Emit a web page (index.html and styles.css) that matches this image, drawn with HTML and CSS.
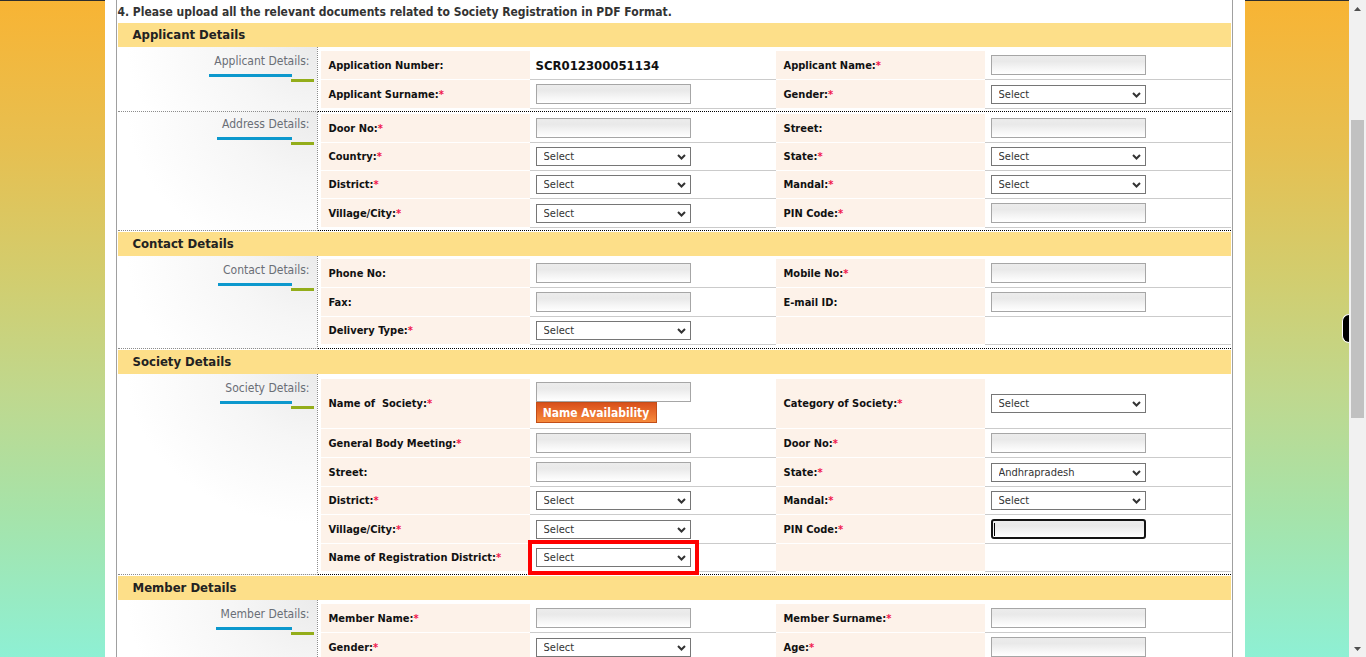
FILE: index.html
```html
<!DOCTYPE html>
<html lang="en">
<head>
<meta charset="utf-8">
<title>Society Registration</title>
<link rel="stylesheet" href="styles.css">
</head>
<body>
<div class="viewport">
  <div class="panel">
    <div class="form">
      <div class="intro">4. Please upload all the relevant documents related to Society Registration in PDF Format.</div>

      <div class="sec-head">Applicant Details</div>
      <div class="block">
        <div class="legend-col"><span class="legend">Applicant Details:</span></div>
        <div class="fields">
          <div class="lbl">Application Number:</div>
          <div class="val"><span class="appno">SCR012300051134</span></div>
          <div class="lbl">Applicant Name:<span class="req">*</span></div>
          <div class="val"><input class="inp" type="text"></div>

          <div class="lbl">Applicant Surname:<span class="req">*</span></div>
          <div class="val"><input class="inp" type="text"></div>
          <div class="lbl">Gender:<span class="req">*</span></div>
          <div class="val"><span class="sel"><select><option>Select</option></select><svg class="chev" width="9" height="6" viewBox="0 0 9 6"><path d="M1 1 L4.5 4.5 L8 1" fill="none" stroke="#333" stroke-width="2"/></svg></span></div>
        </div>
      </div>

      <div class="block addr">
        <div class="legend-col"><span class="legend">Address Details:</span></div>
        <div class="fields">
          <div class="lbl">Door No:<span class="req">*</span></div>
          <div class="val"><input class="inp" type="text"></div>
          <div class="lbl">Street:</div>
          <div class="val"><input class="inp" type="text"></div>

          <div class="lbl">Country:<span class="req">*</span></div>
          <div class="val"><span class="sel"><select><option>Select</option></select><svg class="chev" width="9" height="6" viewBox="0 0 9 6"><path d="M1 1 L4.5 4.5 L8 1" fill="none" stroke="#333" stroke-width="2"/></svg></span></div>
          <div class="lbl">State:<span class="req">*</span></div>
          <div class="val"><span class="sel"><select><option>Select</option></select><svg class="chev" width="9" height="6" viewBox="0 0 9 6"><path d="M1 1 L4.5 4.5 L8 1" fill="none" stroke="#333" stroke-width="2"/></svg></span></div>

          <div class="lbl">District:<span class="req">*</span></div>
          <div class="val"><span class="sel"><select><option>Select</option></select><svg class="chev" width="9" height="6" viewBox="0 0 9 6"><path d="M1 1 L4.5 4.5 L8 1" fill="none" stroke="#333" stroke-width="2"/></svg></span></div>
          <div class="lbl">Mandal:<span class="req">*</span></div>
          <div class="val"><span class="sel"><select><option>Select</option></select><svg class="chev" width="9" height="6" viewBox="0 0 9 6"><path d="M1 1 L4.5 4.5 L8 1" fill="none" stroke="#333" stroke-width="2"/></svg></span></div>

          <div class="lbl">Village/City:<span class="req">*</span></div>
          <div class="val"><span class="sel"><select><option>Select</option></select><svg class="chev" width="9" height="6" viewBox="0 0 9 6"><path d="M1 1 L4.5 4.5 L8 1" fill="none" stroke="#333" stroke-width="2"/></svg></span></div>
          <div class="lbl">PIN Code:<span class="req">*</span></div>
          <div class="val"><input class="inp" type="text"></div>
        </div>
      </div>

      <div class="sec-head">Contact Details</div>
      <div class="block contact">
        <div class="legend-col"><span class="legend">Contact Details:</span></div>
        <div class="fields">
          <div class="lbl">Phone No:</div>
          <div class="val"><input class="inp" type="text"></div>
          <div class="lbl">Mobile No:<span class="req">*</span></div>
          <div class="val"><input class="inp" type="text"></div>

          <div class="lbl">Fax:</div>
          <div class="val"><input class="inp" type="text"></div>
          <div class="lbl">E-mail ID:</div>
          <div class="val"><input class="inp" type="text"></div>

          <div class="lbl">Delivery Type:<span class="req">*</span></div>
          <div class="val"><span class="sel"><select><option>Select</option></select><svg class="chev" width="9" height="6" viewBox="0 0 9 6"><path d="M1 1 L4.5 4.5 L8 1" fill="none" stroke="#333" stroke-width="2"/></svg></span></div>
          <div class="lbl"></div>
          <div class="val"></div>
        </div>
      </div>

      <div class="sec-head">Society Details</div>
      <div class="block society">
        <div class="legend-col"><span class="legend">Society Details:</span></div>
        <div class="fields">
          <div class="lbl">Name of&nbsp; Society:<span class="req">*</span></div>
          <div class="val stack"><input class="inp" type="text"><button class="btn" type="button">Name Availability</button></div>
          <div class="lbl">Category of Society:<span class="req">*</span></div>
          <div class="val"><span class="sel"><select><option>Select</option></select><svg class="chev" width="9" height="6" viewBox="0 0 9 6"><path d="M1 1 L4.5 4.5 L8 1" fill="none" stroke="#333" stroke-width="2"/></svg></span></div>

          <div class="lbl">General Body Meeting:<span class="req">*</span></div>
          <div class="val"><input class="inp" type="text"></div>
          <div class="lbl">Door No:<span class="req">*</span></div>
          <div class="val"><input class="inp" type="text"></div>

          <div class="lbl">Street:</div>
          <div class="val"><input class="inp" type="text"></div>
          <div class="lbl">State:<span class="req">*</span></div>
          <div class="val"><span class="sel"><select><option>Andhrapradesh</option></select><svg class="chev" width="9" height="6" viewBox="0 0 9 6"><path d="M1 1 L4.5 4.5 L8 1" fill="none" stroke="#333" stroke-width="2"/></svg></span></div>

          <div class="lbl">District:<span class="req">*</span></div>
          <div class="val"><span class="sel"><select><option>Select</option></select><svg class="chev" width="9" height="6" viewBox="0 0 9 6"><path d="M1 1 L4.5 4.5 L8 1" fill="none" stroke="#333" stroke-width="2"/></svg></span></div>
          <div class="lbl">Mandal:<span class="req">*</span></div>
          <div class="val"><span class="sel"><select><option>Select</option></select><svg class="chev" width="9" height="6" viewBox="0 0 9 6"><path d="M1 1 L4.5 4.5 L8 1" fill="none" stroke="#333" stroke-width="2"/></svg></span></div>

          <div class="lbl">Village/City:<span class="req">*</span></div>
          <div class="val"><span class="sel"><select><option>Select</option></select><svg class="chev" width="9" height="6" viewBox="0 0 9 6"><path d="M1 1 L4.5 4.5 L8 1" fill="none" stroke="#333" stroke-width="2"/></svg></span></div>
          <div class="lbl">PIN Code:<span class="req">*</span></div>
          <div class="val"><div class="inp focus"><span class="caret"></span></div></div>

          <div class="lbl">Name of Registration District:<span class="req">*</span></div>
          <div class="val"><span class="sel hl"><select><option>Select</option></select><svg class="chev" width="9" height="6" viewBox="0 0 9 6"><path d="M1 1 L4.5 4.5 L8 1" fill="none" stroke="#333" stroke-width="2"/></svg></span></div>
          <div class="lbl"></div>
          <div class="val"></div>
        </div>
      </div>

      <div class="sec-head">Member Details</div>
      <div class="block">
        <div class="legend-col"><span class="legend">Member Details:</span></div>
        <div class="fields">
          <div class="lbl">Member Name:<span class="req">*</span></div>
          <div class="val"><input class="inp" type="text"></div>
          <div class="lbl">Member Surname:<span class="req">*</span></div>
          <div class="val"><input class="inp" type="text"></div>

          <div class="lbl">Gender:<span class="req">*</span></div>
          <div class="val"><span class="sel"><select><option>Select</option></select><svg class="chev" width="9" height="6" viewBox="0 0 9 6"><path d="M1 1 L4.5 4.5 L8 1" fill="none" stroke="#333" stroke-width="2"/></svg></span></div>
          <div class="lbl">Age:<span class="req">*</span></div>
          <div class="val"><input class="inp" type="text"></div>
        </div>
      </div>
    </div>
  </div>
  <div class="side-tab"></div>
</div>
<div class="scrollbar">
  <div class="sb-btn"><svg width="7" height="4" viewBox="0 0 7 4"><path d="M0 4 L3.5 0 L7 4 Z" fill="#505050"/></svg></div>
  <div class="sb-track"><div class="sb-thumb"></div></div>
  <div class="sb-btn"><svg width="7" height="4" viewBox="0 0 7 4"><path d="M0 0 L3.5 4 L7 0 Z" fill="#505050"/></svg></div>
</div>
</body>
</html>
```

FILE: styles.css
```css
* { box-sizing: border-box; }
html, body { margin: 0; padding: 0; }
body {
  display: flex;
  height: 657px;
  overflow: hidden;
  font-family: "DejaVu Sans Condensed", "DejaVu Sans", sans-serif;
  color: #1a1a1a;
}
.viewport {
  flex: 1;
  position: relative;
  display: flex;
  justify-content: center;
  background:
    linear-gradient(#2e2e2e 0, #2e2e2e 1px, transparent 1px),
    linear-gradient(180deg, #f8b434 0%, #e7bf50 22%, #d2cd6e 42%, #bfd88e 60%, #a6e3a9 78%, #8ef0d4 100%);
}
.panel {
  width: 1140px;
  background: #fff;
  padding: 0 12px 0 11px;
}
.form {
  min-height: 100%;
  border-left: 1px solid #a0a0a0;
  border-right: 1px solid #a0a0a0;
}
.intro {
  height: 22px;
  padding: 3px 0 0 1px;
  font-size: 12px;
  line-height: 19px;
  font-weight: bold;
  color: #333;
  white-space: nowrap;
}
.sec-head {
  margin: 1px 1px 0;
  height: 24px;
  padding-left: 15px;
  background: #fddf89;
  font-size: 13px;
  line-height: 24px;
  font-weight: bold;
  color: #222;
}
.block {
  display: flex;
  margin: 0 1px;
}
.legend-col {
  width: 200px;
  flex: none;
  padding: 3px 7px 0 0;
  text-align: right;
  border-right: 1px dotted #8c8c8c;
  border-bottom: 1px dotted #8c8c8c;
  background: radial-gradient(ellipse 190px 150px at 100% 0, #ebebeb 0%, #f6f6f6 45%, #fff 100%);
}
.addr .legend-col { padding-top: 1px; }
.legend {
  position: relative;
  display: inline-block;
  font-size: 12px;
  line-height: 14px;
  color: #6a6e76;
}
.legend::before {
  content: "";
  position: absolute;
  left: -5px;
  right: 18px;
  top: 20px;
  height: 3px;
  background: #0c98cd;
}
.legend::after {
  content: "";
  position: absolute;
  right: -4px;
  width: 23px;
  top: 25px;
  height: 3px;
  background: #93ad1a;
}
.fields {
  flex: 1;
  display: grid;
  grid-template-columns: 209px 246px 209px 246px;
  align-content: start;
  padding: 4px 0 2px 3px;
  border-bottom: 1px dotted #000;
}
.addr .fields { padding-top: 2px; }
.contact .fields { padding-top: 3px; padding-bottom: 3px; }
.society .fields { padding-top: 5px; }
.lbl {
  display: flex;
  align-items: center;
  padding-left: 8px;
  background: #fdf2e9;
  border-bottom: 1px solid #fff;
  font-size: 11px;
  font-weight: bold;
  color: #111;
  white-space: nowrap;
}
.req { color: #f0174d; }
.val {
  display: flex;
  align-items: center;
  min-height: 28px;
  padding: 4px 0 4px 6px;
  border-bottom: 1px solid #cbcbcb;
}
.val.stack {
  flex-direction: column;
  align-items: flex-start;
  padding: 3px 0 5px 6px;
}
.appno {
  font-size: 13px;
  font-weight: bold;
  color: #111;
}
.inp {
  display: block;
  width: 155px;
  height: 20px;
  margin: 0;
  padding: 0 3px;
  border: 1px solid #a6a6a6;
  border-radius: 0;
  background: linear-gradient(180deg, #ececec 0%, #e9e9e9 30%, #f6f6f6 70%, #ffffff 100%);
  font-size: 11px;
}
.inp.focus {
  border: 2px solid #141414;
  border-radius: 3px;
  padding: 2px 1px;
}
.caret {
  display: block;
  width: 1px;
  height: 13px;
  background: #000;
}
.sel {
  position: relative;
  display: inline-block;
  height: 19px;
}
.sel select {
  -webkit-appearance: none;
  appearance: none;
  display: block;
  width: 155px;
  height: 19px;
  margin: 0;
  padding: 0 0 0 7px;
  border: 1px solid #767676;
  border-radius: 0;
  background: #fff;
  font-family: "DejaVu Sans Condensed", "DejaVu Sans", sans-serif;
  font-size: 11px;
  color: #333;
}
.sel .chev {
  position: absolute;
  right: 5px;
  top: 7px;
}
.sel.hl select {
  outline: 4px solid #ff0000;
  outline-offset: 4px;
}
.btn {
  display: block;
  width: 121px;
  height: 21px;
  margin: 0;
  padding: 0;
  border: 1px solid #c24e18;
  background: linear-gradient(180deg, #d8501b 0%, #e96c2b 50%, #f68b3c 100%);
  color: #fff;
  font-family: "DejaVu Sans Condensed", "DejaVu Sans", sans-serif;
  font-size: 12px;
  font-weight: bold;
  text-align: center;
}
.side-tab {
  position: absolute;
  right: 0;
  top: 314px;
  width: 7px;
  height: 29px;
  background: #000;
  border: 1px solid #fff;
  border-right: 0;
  border-radius: 7px 0 0 7px;
}
.scrollbar {
  width: 17px;
  flex: none;
  display: flex;
  flex-direction: column;
  background: #f1f1f1;
}
.sb-btn {
  height: 17px;
  display: flex;
  align-items: center;
  justify-content: center;
}
.sb-track {
  flex: 1;
}
.sb-thumb {
  margin: 103px 2px 0;
  height: 298px;
  background: #c1c1c1;
}
```
